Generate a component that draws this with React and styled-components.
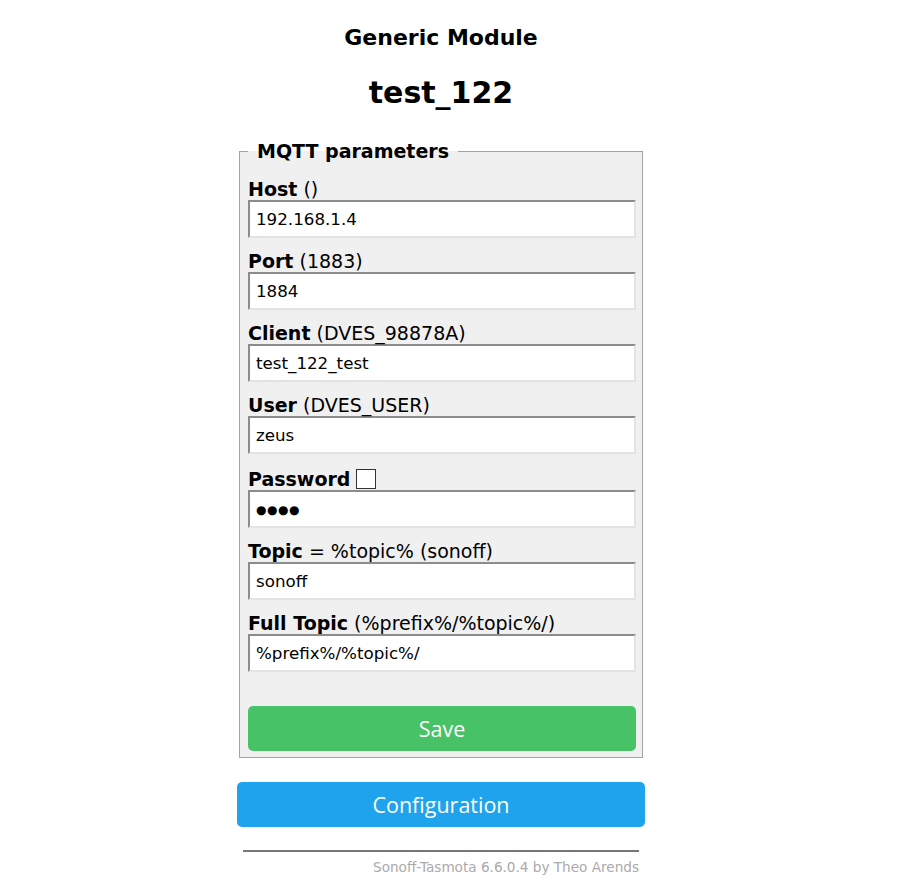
import React from "react";
import styled, { createGlobalStyle } from "styled-components";

const GlobalStyle = createGlobalStyle`
  body {
    margin: 0;
    background: #fff;
    font-family: "DejaVu Sans", Verdana, sans-serif;
    color: #000;
  }
`;

const Page = styled.div`
  width: 882px;
  padding-top: 26px;
  display: flex;
  flex-direction: column;
  align-items: center;
  text-align: center;
`;

const ModuleName = styled.h3`
  margin: 0;
  font-size: 22px;
  line-height: 24px;
  font-weight: bold;
`;

const DeviceName = styled.h2`
  margin: 25px 0 0;
  font-size: 30px;
  line-height: 36px;
  font-weight: bold;
`;

const Column = styled.div`
  width: 408px;
  margin-top: 29px;
  text-align: left;
`;

const Fieldset = styled.fieldset`
  margin: 0 2px;
  padding: 16px 6px 6px 8px;
  border: 1px solid #a3a3a3;
  background: #f0f0f0;
  min-width: 0;
`;

const Legend = styled.legend`
  padding: 0 9px;
  font-size: 19px;
  line-height: 22px;
  font-weight: bold;
`;

const Field = styled.div`
  margin-top: ${(p) => (p.first ? "0" : "12px")};
`;

const Label = styled.div`
  font-size: 19px;
  line-height: 22px;
  padding-top: ${(p) => (p.tall ? "2px" : "0")};
  white-space: nowrap;
`;

const Check = styled.span`
  display: inline-block;
  width: 20px;
  height: 20px;
  margin-left: 6px;
  border: 1px solid #333;
  background: #fff;
  vertical-align: -3px;
  box-sizing: border-box;
`;

const Input = styled.div`
  box-sizing: border-box;
  height: 38px;
  width: 100%;
  padding: 0 6px;
  background: #fff;
  border: 2px solid;
  border-color: #8c8c8c #e3e3e3 #e3e3e3 #8c8c8c;
  font-size: 16.7px;
  line-height: 34px;
  white-space: nowrap;
  overflow: hidden;
`;

const Dots = styled.span`
  font-size: 12px;
  letter-spacing: 0.5px;
  vertical-align: 1px;
`;

const Button = styled.button`
  display: block;
  width: 100%;
  height: 45px;
  margin-top: ${(p) => p.gap || 0}px;
  border: 0;
  border-radius: 5px;
  background: ${(p) => p.color};
  color: #fff;
  font-family: "Open Sans", "Noto Sans", sans-serif;
  font-size: 21.5px;
  cursor: pointer;
`;

const Outer = styled.div`
  margin-top: 24px;
`;

const Footer = styled.div`
  text-align: right;
  margin-top: 23px;
  padding: 0 6px;
`;

const Rule = styled.div`
  height: 2px;
  background: #777;
`;

const Credit = styled.div`
  margin-top: 7px;
  font-size: 13.6px;
  line-height: 16px;
  color: #aaa;
`;

const fields = [
  { name: "Host", hint: " ()", value: "192.168.1.4" },
  { name: "Port", hint: " (1883)", value: "1884" },
  { name: "Client", hint: " (DVES_98878A)", value: "test_122_test" },
  { name: "User", hint: " (DVES_USER)", value: "zeus" },
  { name: "Password", password: true, value: "" },
  { name: "Topic", hint: " = %topic% (sonoff)", value: "sonoff" },
  { name: "Full Topic", hint: " (%prefix%/%topic%/)", value: "%prefix%/%topic%/" },
];

export default function App() {
  return (
    <Page>
      <GlobalStyle />
      <ModuleName>Generic Module</ModuleName>
      <DeviceName>test_122</DeviceName>
      <Column>
        <Fieldset>
          <Legend>MQTT parameters</Legend>
          {fields.map((f, i) => (
            <Field key={f.name} first={i === 0}>
              <Label tall={f.password}>
                <b>{f.name}</b>
                {f.password ? <Check /> : f.hint}
              </Label>
              <Input>{f.password ? <Dots>●●●●</Dots> : f.value}</Input>
            </Field>
          ))}
          <Button gap={34} color="#47c266">
            Save
          </Button>
        </Fieldset>
        <Outer>
          <Button color="#1fa3ec">Configuration</Button>
        </Outer>
        <Footer>
          <Rule />
          <Credit>Sonoff-Tasmota 6.6.0.4 by Theo Arends</Credit>
        </Footer>
      </Column>
    </Page>
  );
}
